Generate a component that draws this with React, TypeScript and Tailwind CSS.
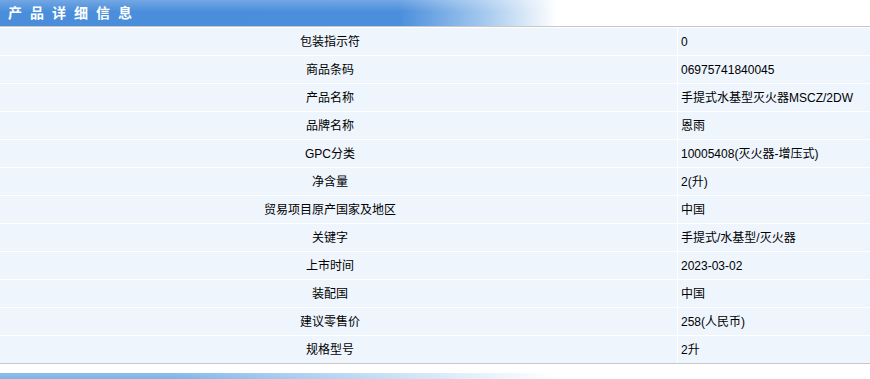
const rows: [string, string][] = [
  ["包装指示符", "0"],
  ["商品条码", "06975741840045"],
  ["产品名称", "手提式水基型灭火器MSCZ/2DW"],
  ["品牌名称", "恩雨"],
  ["GPC分类", "10005408(灭火器-增压式)"],
  ["净含量", "2(升)"],
  ["贸易项目原产国家及地区", "中国"],
  ["关键字", "手提式/水基型/灭火器"],
  ["上市时间", "2023-03-02"],
  ["装配国", "中国"],
  ["建议零售价", "258(人民币)"],
  ["规格型号", "2升"],
];

const font = "font-['Liberation_Sans','Noto_Sans_CJK_SC',sans-serif]";

function Titulo({ children }: { children?: string }) {
  return (
    <div className="flex h-[26px] items-center bg-[linear-gradient(to_bottom,rgba(255,255,255,0.22),rgba(255,255,255,0)_45%),linear-gradient(to_right,#4a8edb_0%,#4b8fdc_46%,#a9cbef_56%,#ffffff_64%)] pl-[8px]">
      {children && (
        <span className={`text-[14px] font-bold leading-none tracking-[8px] text-white ${font}`}>
          {children}
        </span>
      )}
    </div>
  );
}

export default function App() {
  return (
    <div className={`h-[379px] w-[870px] overflow-hidden bg-white ${font}`}>
      <Titulo>产品详细信息</Titulo>
      <div className="border-t border-b border-[#c8c8c8]">
        <div className="flex flex-col gap-px pt-px">
          {rows.map(([rotulo, valor]) => (
            <div key={rotulo} className="flex h-[27px] gap-px text-[12px] text-black">
              <div className="flex w-[677px] items-center justify-center bg-[#eef5fd] pt-px pr-[17px]">{rotulo}</div>
              <div className="flex flex-1 items-center bg-[#eef5fd] pt-px pl-[3px]">{valor}</div>
            </div>
          ))}
        </div>
      </div>
      <div className="h-[9px]" />
      <div className="h-[26px] bg-[linear-gradient(to_bottom,#8fbdea,#4a8edb)]">
        <div className="h-full bg-[linear-gradient(to_right,rgba(255,255,255,0)_0%,rgba(255,255,255,0)_20%,#ffffff_64%)]" />
      </div>
    </div>
  );
}
